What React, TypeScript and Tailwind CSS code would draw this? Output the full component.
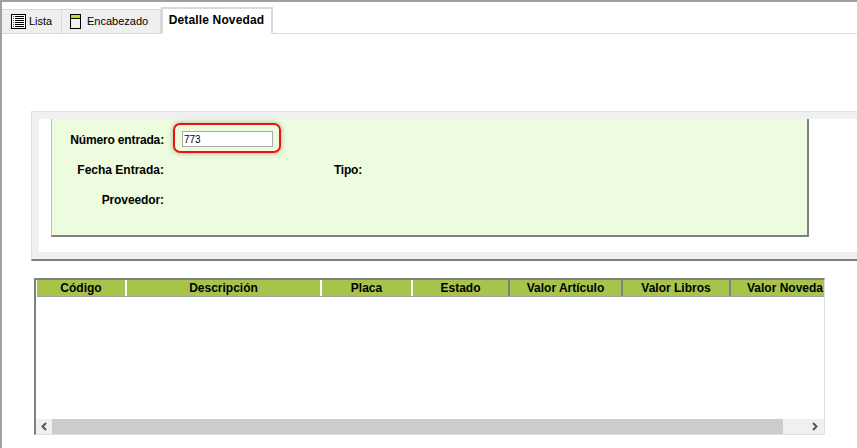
const font = "font-['Liberation_Sans',sans-serif]";

function ListIcon() {
  return (
    <svg width="15" height="15" viewBox="0 0 15 15" className="shrink-0" shapeRendering="crispEdges">
      <rect x="0.5" y="0.5" width="14" height="14" fill="#fff" stroke="#000" />
      {[2, 4, 6, 8, 10, 12].map((y) => (
        <g key={y}>
          <rect x="2" y={y} width="1" height="1" fill="#e02020" />
          <rect x="4" y={y} width="9" height="1" fill="#000" />
        </g>
      ))}
    </svg>
  );
}

function NoteIcon() {
  return (
    <svg width="13" height="15" viewBox="0 0 13 15" className="shrink-0" shapeRendering="crispEdges">
      <rect x="1.5" y="0.5" width="10" height="14" fill="#f4f4ea" stroke="#000" />
      <rect x="2" y="1" width="9" height="3" fill="#b5e61d" />
      <rect x="2" y="4" width="9" height="1" fill="#000" />
    </svg>
  );
}

const columns = [
  { label: "Código", w: "w-[90px]", sep: "border-white" },
  { label: "Descripción", w: "w-[195px]", sep: "border-white" },
  { label: "Placa", w: "w-[91px]", sep: "border-white" },
  { label: "Estado", w: "w-[97px]", sep: "border-[#808080]" },
  { label: "Valor Artículo", w: "w-[113px]", sep: "border-[#808080]" },
  { label: "Valor Libros", w: "w-[108px]", sep: "border-[#808080]" },
];

export default function App() {
  return (
    <div className={`${font} w-[857px] h-[448px] overflow-hidden bg-white border-t-2 border-l-2 border-[#a0a0a0] text-black text-[12px]`}>
      <div className="h-[32px] flex items-end border-b border-[#d9d9d9]">
        <div className="h-[25px] w-[60px] -mb-px flex items-center gap-[3px] pl-[9px] bg-[#efefef] border-t border-r border-[#d9d9d9] border-b text-[11px]">
          <ListIcon />
          <span>Lista</span>
        </div>
        <div className="h-[25px] w-[99px] -mb-px flex items-center gap-[5px] pl-[7px] bg-[#efefef] border-t border-r border-[#d9d9d9] border-b text-[11px]">
          <NoteIcon />
          <span>Encabezado</span>
        </div>
        <div className="h-[27px] w-[112px] -mb-px flex items-center justify-center pb-[3px] pr-[1px] bg-white border-x-2 border-t-2 border-[#d9d9d9] border-b border-b-white font-bold tracking-[0.15px]">
          Detalle Novedad
        </div>
      </div>

      <div className="ml-[29px] mt-[77px] h-[150px] pt-[7px] pl-[7px] pb-[7px] bg-[#f0f0f0] border-t border-l border-[#e0e0e0] border-b-2 border-b-[#808080]">
        <div className="h-full bg-white pl-[12px]">
          <div className="w-[758px] h-[118px] bg-[#edfcde] border-l border-l-[#c0c0c0] border-r-2 border-b-2 border-[#808080] font-bold">
            <div className="h-[40px] flex items-center">
              <div className="w-[112px] text-right mt-[1px] tracking-[-0.15px]">Número entrada:</div>
              <div className="relative ml-[18px]">
                <input
                  readOnly
                  value="773"
                  className="block w-[91px] h-[16px] bg-white border border-[#a9a9a9] px-[1px] text-[10px] text-black font-normal outline-none"
                />
                <div className="absolute -left-[9px] -top-[8px] -right-[8px] -bottom-[6px] rounded-[7px] border-2 border-[#ee1111] shadow-[0_0_5px_rgba(60,80,40,0.45)]" />
              </div>
            </div>
            <div className="h-[30px] mt-[-4px] flex items-center">
              <div className="w-[112px] text-right">Fecha Entrada:</div>
              <div className="w-[198px] text-right tracking-[-0.2px]">Tipo:</div>
            </div>
            <div className="h-[30px] flex items-center">
              <div className="w-[112px] text-right tracking-[-0.1px]">Proveedor:</div>
            </div>
          </div>
        </div>
      </div>

      <div className="ml-[32px] mt-[17px] w-[791px] h-[157px] flex flex-col border-t-2 border-l-2 border-[#808080] border-r border-r-[#e0e0e0] border-b border-b-[#e0e0e0]">
        <div className="h-[17px] ml-px flex bg-[#a8c34b] border-b border-[#a0a0a0] font-bold shrink-0 overflow-hidden">
          {columns.map((c) => (
            <div key={c.label} className={`${c.w} shrink-0 text-center border-r-2 ${c.sep} leading-[17px]`}>
              {c.label}
            </div>
          ))}
          <div className="flex-1 pl-[16px] whitespace-nowrap leading-[17px]">Valor Noveda</div>
        </div>
        <div className="flex-1" />
        <div className="h-[15px] flex items-center bg-[#f0f0f0] shrink-0">
          <svg width="16" height="15" viewBox="0 0 16 15" className="shrink-0">
            <path d="M10 4 L6.5 7.5 L10 11" fill="none" stroke="#555" strokeWidth="2" />
          </svg>
          <div className="w-[731px] h-full bg-[#cdcdcd]" />
          <div className="flex-1 flex justify-end pr-[1px]">
            <svg width="16" height="15" viewBox="0 0 16 15">
              <path d="M6 4 L9.5 7.5 L6 11" fill="none" stroke="#555" strokeWidth="2" />
            </svg>
          </div>
        </div>
      </div>
    </div>
  );
}
